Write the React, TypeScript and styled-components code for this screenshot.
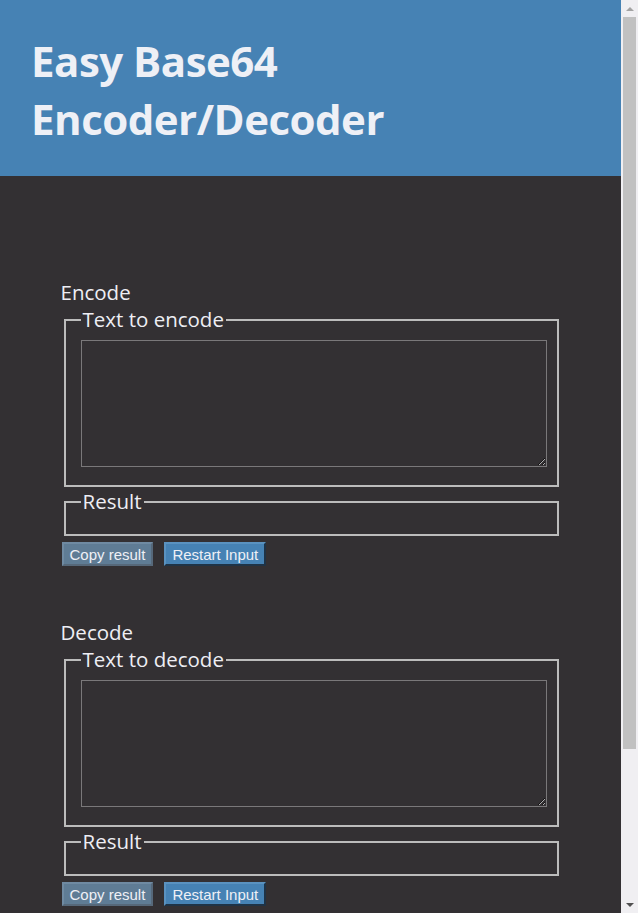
import { createGlobalStyle, styled } from "styled-components";

const GlobalStyle = createGlobalStyle`
  body {
    margin: 0;
    background: #333033;
    color: #eeeef4;
    font-family: "Open Sans", "Noto Sans", sans-serif;
  }
`;

const Page = styled.div`
  display: flex;
  align-items: flex-start;
`;

const Content = styled.div`
  flex: 1;
  min-width: 0;
`;

// stand-in for the window scrollbar seen in the screenshot
const Rail = styled.div`
  position: sticky;
  top: 0;
  flex: 0 0 17px;
  height: 100vh;
  display: flex;
  flex-direction: column;
  background: #f0eff2;
`;

const Arrow = styled.div<{ $down?: boolean }>`
  height: 17px;
  display: flex;
  align-items: center;
  justify-content: center;
  &::before {
    content: "";
    border-left: 4px solid transparent;
    border-right: 4px solid transparent;
    ${(p) =>
      p.$down ? "border-top: 4px solid #505050;" : "border-bottom: 4px solid #a3a3a3;"}
  }
`;

const Thumb = styled.div`
  height: 732px;
  margin: 0 2px;
  background: #c1c1c1;
`;

const Track = styled.div`
  flex: 1;
`;

const Header = styled.header`
  box-sizing: border-box;
  height: 176px;
  padding: 32px 31px 0;
  background: #4682b4;
`;

const Title = styled.h1`
  margin: 0;
  font-size: 42px;
  line-height: 58px;
  font-weight: 700;
  letter-spacing: -0.5px;
  color: #eef0f6;
`;

const Main = styled.main`
  width: 500px;
  margin: 0 auto;
  padding: 102px 0 190px;
`;

const Section = styled.section`
  & + & {
    margin-top: 52px;
  }
`;

const Heading = styled.h2`
  margin: 0;
  font-size: 20.5px;
  line-height: 28px;
  font-weight: 400;
`;

const Fieldset = styled.fieldset`
  min-width: 0;
  margin: 0 2px 1px 3px;
  padding: 7px 15px 12px;
  border: 2px solid #bcbcbc;
  font-size: 20.5px;
`;

const Legend = styled.legend`
  padding: 0 2px;
  line-height: 27px;
`;

const TextArea = styled.textarea`
  display: block;
  box-sizing: border-box;
  width: 466px;
  height: 127px;
  margin-bottom: 6px;
  background: transparent;
  border: 1px solid #7a787a;
  color: #eeeef4;
  font-family: "Liberation Mono", monospace;
  font-size: 13px;
`;

const Output = styled.output`
  display: block;
  word-break: break-all;
  font-size: 16px;
`;

const Actions = styled.div`
  display: flex;
  gap: 11px;
  margin-top: 6px;
  padding-left: 1px;
`;

const Button = styled.button<{ $muted?: boolean }>`
  height: 24px;
  padding: 0 6px;
  font-family: "Liberation Sans", Arial, sans-serif;
  font-size: 15px;
  color: #eef0f6;
  background: ${(p) => (p.$muted ? "#5f7c95" : "#4682b4")};
  border: 2px solid;
  border-color: ${(p) =>
    p.$muted ? "#6f8aa2 #56687a #56687a #6f8aa2" : "#5a92c0 #1f3346 #1f3346 #5a92c0"};
  cursor: pointer;
`;

function Coder({ title, label }: { title: string; label: string }) {
  return (
    <Section>
      <Heading>{title}</Heading>
      <Fieldset>
        <Legend>{label}</Legend>
        <TextArea />
      </Fieldset>
      <Fieldset>
        <Legend>Result</Legend>
        <Output />
      </Fieldset>
      <Actions>
        <Button $muted>Copy result</Button>
        <Button>Restart Input</Button>
      </Actions>
    </Section>
  );
}

export default function App() {
  return (
    <Page>
      <GlobalStyle />
      <Content>
        <Header>
          <Title>
            Easy Base64
            <br />
            Encoder/Decoder
          </Title>
        </Header>
        <Main>
          <Coder title="Encode" label="Text to encode" />
          <Coder title="Decode" label="Text to decode" />
        </Main>
      </Content>
      <Rail>
        <Arrow />
        <Thumb />
        <Track />
        <Arrow $down />
      </Rail>
    </Page>
  );
}
